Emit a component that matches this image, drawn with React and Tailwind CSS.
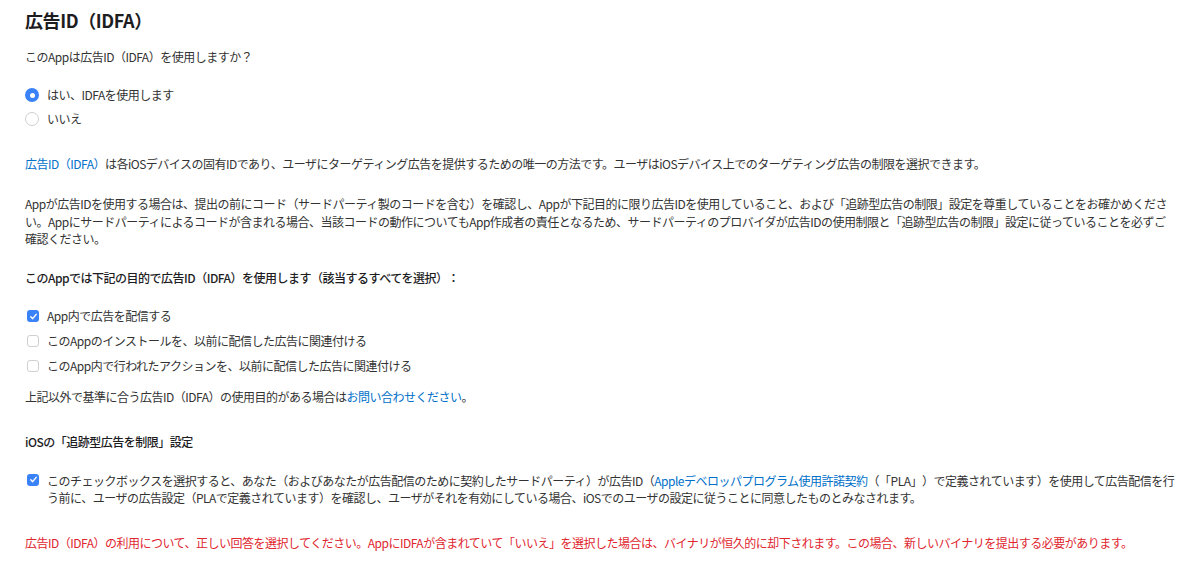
import React from "react";

function Radio({ checked, label }) {
  return (
    <label className="flex items-center h-[24px]">
      {checked ? (
        <span className="w-[14px] h-[14px] rounded-full bg-[#3a82f7] flex items-center justify-center ml-[25px]">
          <span className="w-[5px] h-[5px] rounded-full bg-white" />
        </span>
      ) : (
        <span className="w-[14px] h-[14px] rounded-full border border-[#d0d0d0] bg-white ml-[25px]" />
      )}
      <span className="ml-[8px]">{label}</span>
    </label>
  );
}

function Check({ checked }) {
  return checked ? (
    <span className="shrink-0 w-[12px] h-[12px] rounded-[3px] bg-[#3a82f7] flex items-center justify-center">
      <svg width="9" height="9" viewBox="0 0 10 10" fill="none">
        <path d="M2 5.3 L4.1 7.4 L8 2.6" stroke="white" strokeWidth="1.6" strokeLinecap="round" strokeLinejoin="round" />
      </svg>
    </span>
  ) : (
    <span className="shrink-0 w-[12px] h-[12px] rounded-[3px] border border-[#d0d0d0] bg-white" />
  );
}

function CheckRow({ checked, label }) {
  return (
    <label className="flex items-center h-[25px] pl-[27px]">
      <Check checked={checked} />
      <span className="ml-[8px]">{label}</span>
    </label>
  );
}

export default function App() {
  return (
    <div
      className="w-[1200px] h-[564px] bg-white text-[#333333] text-[12px] leading-[18px] tracking-[-0.5px] [text-spacing-trim:space-all] px-[25px] pt-[8px] overflow-hidden"
      style={{ fontFamily: '"Noto Sans CJK JP", "Noto Sans", sans-serif' }}
    >
      <h1 className="text-[18px] leading-[24px] font-bold text-[#1d1d1f] tracking-[-0.4px]">広告ID（IDFA）</h1>

      <p className="mt-[16px]">このAppは広告ID（IDFA）を使用しますか？</p>

      <div className="mt-[17px] -ml-[25px]">
        <Radio checked label="はい、IDFAを使用します" />
        <Radio label="いいえ" />
      </div>

      <p className="mt-[24px]">
        <a className="text-[#0070c9]">広告ID（IDFA）</a>
        は各iOSデバイスの固有IDであり、ユーザにターゲティング広告を提供するための唯一の方法です。ユーザはiOSデバイス上でのターゲティング広告の制限を選択できます。
      </p>

      <p className="mt-[22px] leading-[17.5px]">
        Appが広告IDを使用する場合は、提出の前にコード（サードパーティ製のコードを含む）を確認し、Appが下記目的に限り広告IDを使用していること、および「追跡型広告の制限」設定を尊重していることをお確かめください。Appにサードパーティによるコードが含まれる場合、当該コードの動作についてもApp作成者の責任となるため、サードパーティのプロバイダが広告IDの使用制限と「追跡型広告の制限」設定に従っていることを必ずご確認ください。
      </p>

      <p className="mt-[21px] font-medium text-[#1d1d1f]">
        このAppでは下記の目的で広告ID（IDFA）を使用します（該当するすべてを選択）：
      </p>

      <div className="mt-[17px] -ml-[25px]">
        <CheckRow checked label="App内で広告を配信する" />
        <CheckRow label="このAppのインストールを、以前に配信した広告に関連付ける" />
        <CheckRow label="このApp内で行われたアクションを、以前に配信した広告に関連付ける" />
      </div>

      <p className="mt-[9px]">
        上記以外で基準に合う広告ID（IDFA）の使用目的がある場合は
        <a className="text-[#0070c9]">お問い合わせください</a>。
      </p>

      <p className="mt-[27px] font-medium text-[#1d1d1f]">iOSの「追跡型広告を制限」設定</p>

      <div className="mt-[21px] flex items-start pl-[2px] leading-[17px]">
        <span className="mt-[2px]">
          <Check checked />
        </span>
        <p className="ml-[8px]">
          このチェックボックスを選択すると、あなた（およびあなたが広告配信のために契約したサードパーティ）が広告ID（
          <a className="text-[#0070c9]">Appleデベロッパプログラム使用許諾契約</a>
          （「PLA」）で定義されています）を使用して広告配信を行う前に、ユーザの広告設定（PLAで定義されています）を確認し、ユーザがそれを有効にしている場合、iOSでのユーザの設定に従うことに同意したものとみなされます。
        </p>
      </div>

      <p className="mt-[28px] text-[#e0262f]">
        広告ID（IDFA）の利用について、正しい回答を選択してください。AppにIDFAが含まれていて「いいえ」を選択した場合は、バイナリが恒久的に却下されます。この場合、新しいバイナリを提出する必要があります。
      </p>
    </div>
  );
}
